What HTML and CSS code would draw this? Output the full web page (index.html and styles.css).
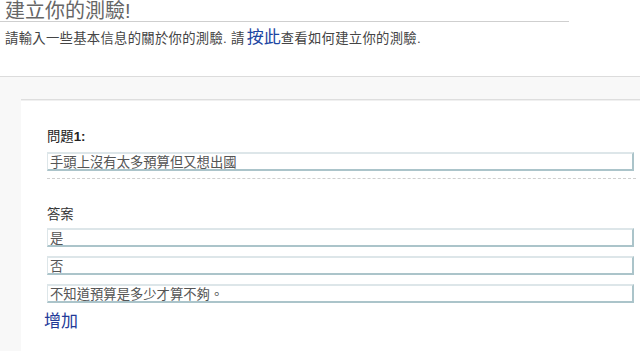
FILE: index.html
```html
<!DOCTYPE html>
<html lang="zh-Hant">
<head>
  <meta charset="UTF-8">
  <title>建立你的測驗</title>
  <link rel="stylesheet" href="styles.css">
</head>
<body>
  <div class="page-head">
    <h1 class="title">建立你的測驗!</h1>
    <p class="intro">請輸入一些基本信息的關於你的測驗. 請<a class="help-link" href="#">按此</a>查看如何建立你的測驗.</p>
  </div>

  <div class="builder">
    <div class="panel">
      <div class="question">
        <label class="q-label" for="q1">問題<b>1:</b></label>
        <input class="field" type="text" id="q1" value="手頭上沒有太多預算但又想出國">
      </div>

      <div class="answers">
        <label class="a-label">答案</label>
        <input class="field" type="text" value="是">
        <input class="field" type="text" value="否">
        <input class="field" type="text" value="不知道預算是多少才算不夠。">
        <a class="add-link" href="#">增加</a>
      </div>
    </div>
  </div>
</body>
</html>
```

FILE: styles.css
```css
:root {
  --text-color: #444;
  --line-color: #d4d4d4;
  --link-color: #1d46a2;
  --field-light: #dde6e9;
  --field-dark: #abc4ca;
}

html, body {
  height: 100%;
}

body {
  margin: 0;
  font-family: "Liberation Sans", "Noto Sans CJK TC", sans-serif;
  color: var(--text-color);
  background: #fff;
  display: flex;
  flex-direction: column;
}

.title {
  margin: 0;
  width: 569px;
  box-sizing: border-box;
  padding: 2px 0 0 5px;
  font-size: 20px;
  line-height: 19px;
  font-weight: normal;
  color: #666;
  border-bottom: 1px solid #cfcfcf;
}

.intro {
  margin: 6px 0 0;
  padding-left: 5px;
  font-size: 13.33px;
  line-height: 20px;
  letter-spacing: 0.3px;
}

.help-link {
  margin-left: 2px;
  font-size: 17px;
  line-height: 20px;
  letter-spacing: 0;
  color: var(--link-color);
  text-decoration: none;
}

.builder {
  flex: 1;
  margin-top: 27px;
  padding: 22px 0 0 21px;
  background: #f8f8f8;
  border-top: 1px solid #dcdcdc;
  display: flex;
}

.panel {
  flex: 1;
  background: #fff;
  border-top: 1px solid #dedede;
  box-shadow: 0 1px 0 #f0f0f0 inset;
  padding: 0 4px 0 26px;
}

.question {
  padding: 29px 0 7px;
  border-bottom: 1px dashed #cfcfcf;
}

.q-label,
.a-label {
  display: block;
  font-size: 13.33px;
  line-height: 16px;
  margin-bottom: 7px;
}

.q-label {
  color: #222;
}

.a-label {
  color: #333;
  margin-bottom: 5px;
}

.answers {
  padding-top: 28px;
  display: flex;
  flex-direction: column;
  align-items: flex-start;
}

.field {
  display: block;
  width: 587px;
  height: 19px;
  box-sizing: border-box;
  margin: 0;
  padding: 0 2px;
  font-family: inherit;
  font-size: 13.33px;
  color: #555;
  background: #fff;
  border-style: solid;
  border-width: 2px 2px 2px 1px;
  border-color: var(--field-light) var(--field-dark) var(--field-dark) var(--field-light);
  outline: none;
}

.answers .field {
  margin-bottom: 9px;
}

.add-link {
  margin-left: -3px;
  font-size: 17px;
  line-height: 20px;
  color: #233a98;
  text-decoration: none;
}
```
